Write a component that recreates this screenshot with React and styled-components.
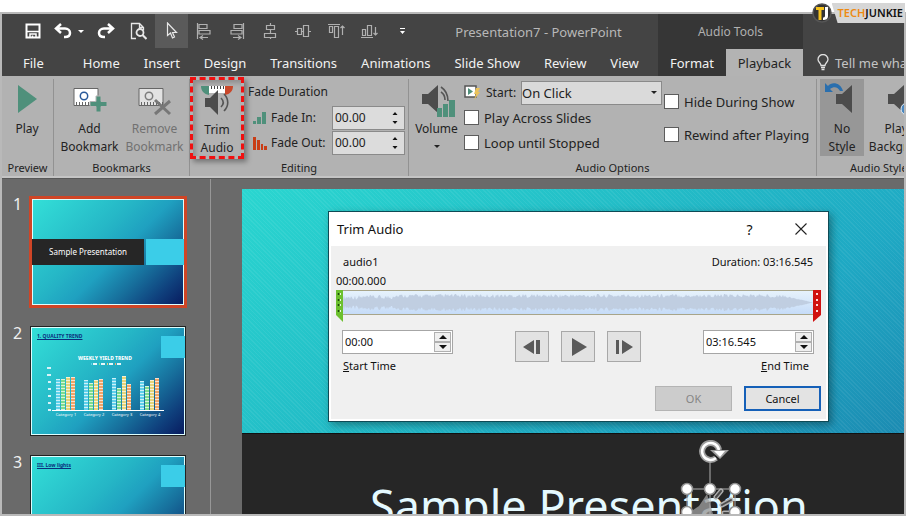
import React, { useState } from "react";
import styled, { createGlobalStyle } from "styled-components";

const TABS = [
  "Home",
  "Insert",
  "Design",
  "Transitions",
  "Animations",
  "Slide Show",
  "Review",
  "View",
];

const CHART = [
  [31, 31, 33, 33],
  [30, 27, 30, 31],
  [32, 22, 34, 26],
  [29, 24, 30, 32],
];
const CHART_COLORS = ["#5fd0ea", "#7fdc8c", "#e6d47a", "#f0a468"];

// peaks for the audio clip, quiet at the start and fading out at the end
function buildWave(width, mid) {
  const top = [];
  const bottom = [];
  for (let x = 0; x <= width; x += 1) {
    const noise = Math.abs(Math.sin(x * 12.9898) * 43758.5453) % 1;
    let level = 5 + noise * 4;
    if (x < 50) level = 3 + noise * 5;
    if (x > width - 30) level = Math.max(0, ((width - x) / 30) * 8 * (0.7 + noise * 0.3));
    top.push(`${x},${(mid - level).toFixed(1)}`);
    bottom.unshift(`${x},${(mid + level).toFixed(1)}`);
  }
  return top.concat(bottom).join(" ");
}

const WAVE = buildWave(470, 12);

function AlignIcon({ kind }) {
  const shapes = {
    left: <path d="M1.500 1v16M3 2.500h8v4H3zM3 8.500h11v3.500H3zM4 15.500h8M7 13.500l-3 2 3 2" />,
    right: <path d="M14.500 1v16M5 2.500h8v4H5zM2 8.500h11v3.500H2zM4 15.500h8M9 13.500l3 2-3 2" />,
    center: <path d="M8.500 1v2M8.500 8v3M8.500 16v1M4.500 3.500h8v4h-8zM2.500 11.500h11v4h-11z" />,
    middle: <path d="M0 9.500h2M7 9.500h2M14 9.500h2M2.500 6.500h4v6h-4zM8.500 3.500h5v11h-5z" />,
    top: <path d="M0 2.500h12M1.500 4.500h3v6h-3zM6.500 4.500h4v11h-4zM14.500 4v9M12.500 6l2-2 2 2" />,
    bottom: <path d="M0 15.500h12M1.500 7.500h3v6h-3zM6.500 3.500h4v10h-4zM14.500 5v8M12.500 11l2 2 2-2" />,
  };
  return (
    <svg width="17" height="18" viewBox="0 0 17 18" fill="none" stroke="#b0b0b0" strokeWidth="1.200">
      {shapes[kind]}
    </svg>
  );
}

function SaveIcon() {
  return (
    <svg width="16" height="16" viewBox="0 0 16 16" fill="none" stroke="#fff" strokeWidth="2">
      <path d="M1.500 1.500h13v13h-13z" />
      <path d="M2 8.500h12" strokeWidth="1.500" />
      <path d="M5 15v-4h6v4M7.500 12.500v2" strokeWidth="1.500" />
    </svg>
  );
}

function UndoIcon({ flip }) {
  return (
    <svg width="18" height="16" viewBox="0 0 18 16" fill="none" stroke="#fff" strokeWidth="2.500">
      <g transform={flip ? "matrix(-1 0 0 1 18 0)" : undefined}>
        <path d="M7 1L2 5.500 7 10M2.500 5.500H11c3 0 5 2 5 4.500S14 14 11 14h-1" />
      </g>
    </svg>
  );
}

function PreviewIcon() {
  return (
    <svg width="17" height="18" viewBox="0 0 17 18" fill="none" stroke="#e8e8e8" strokeWidth="1.300">
      <path d="M6 16.500H1.500v-15h8l4 4v3M9.500 1.500v4h4" />
      <circle cx="10" cy="10.500" r="3.500" strokeWidth="1.800" />
      <path d="M12.500 13l4 4" strokeWidth="2.200" />
    </svg>
  );
}

function PointerIcon() {
  return (
    <svg width="12" height="18" viewBox="0 0 12 18" fill="none" stroke="#e8e8e8" strokeWidth="1.200">
      <path d="M1.500 1v12.500l3-2.500 2 5 2-1-2-4.500h4z" />
    </svg>
  );
}

function SpeakerIcon({ children, x = 3 }) {
  return (
    <svg width="36" height="32" viewBox="0 0 36 32">
      <path transform={`translate(${x} 0)`} d="M0 11h6l10-9v28l-10-9H0z" fill="#4c4c4c" />
      {children}
    </svg>
  );
}

function TrimIcon() {
  return (
    <svg width="36" height="32" viewBox="0 0 36 32">
      <path d="M8 2h20v7H8z" fill="#fff" />
      <path d="M9 3.500h18" stroke="#444" strokeWidth="3" strokeDasharray="1 2" />
      <path d="M2 2h8v9C5 10 2 7 2 2z" fill="#4f907b" />
      <path d="M34 2h-8v9c5-1 8-4 8-9z" fill="#c9472a" />
      <path d="M6 14h5l8-8v25l-8-8H6z" fill="#4c4c4c" />
      <path d="M22 14c3 3 3 6 0 9M25 10c5 5 5 12 0 17" fill="none" stroke="#555" strokeWidth="1.600" />
    </svg>
  );
}

function BookmarkIcon({ removed }) {
  return (
    <svg width="36" height="32" viewBox="0 0 36 32">
      <path d="M2 5.500h24v17H2z" fill={removed ? "#e2e2e2" : "#fff"} stroke="#666" />
      <path d="M4 20.500h22" stroke="#666" strokeWidth="3" strokeDasharray="1 2" />
      <circle cx="12" cy="13" r="3.700" fill="none" stroke={removed ? "#7d7d7d" : "#2a5a9a"} strokeWidth="1.500" />
      {removed ? (
        <path d="M18 17l15 14M33 18L18 31" stroke="#777" strokeWidth="3" fill="none" />
      ) : (
        <path d="M24 13h5v5.500h6v5h-6V29h-5v-5.500h-6v-5h6z" fill="#4f907b" stroke="#b3b3b3" />
      )}
    </svg>
  );
}

function Bars({ down }) {
  return (
    <svg width="14" height="14" viewBox="0 0 14 14" fill={down ? "#c93d16" : "#4f907b"}>
      {down ? (
        <path d="M0 1h3v13H0zM4 4h3v10H4zM8 8h2v6H8zM11 10h3v4h-3z" />
      ) : (
        <path d="M0 10h3v3H0zM4 6h4v7H4zM9 1h4v12H9z" />
      )}
    </svg>
  );
}

function ThumbChart() {
  return (
    <svg width="124" height="60" viewBox="0 0 124 60">
      <text x="60" y="8" textAnchor="middle" fontSize="5" fontWeight="800" fill="#fff">
        WEEKLY YIELD TREND
      </text>
      {CHART_COLORS.map((color, i) => (
        <g key={color}>
          <rect x={46 + i * 8} y="11" width="1" height="2" fill={color} />
          <rect x={48 + i * 8} y="11" width="4" height="2" fill="#e6f6fa" />
        </g>
      ))}
      {[0, 1, 2, 3, 4, 5, 6].map((n) => (
        <rect key={n} x={n > 4 ? 2 : 3} y={15 + (6 - n) * 7} width={n > 4 ? 4 : 3} height="2" fill="#d8f3f8" />
      ))}
      {CHART.map((group, g) =>
        group.map((h, i) => (
          <g key={`${g}-${i}`}>
            <rect x={11 + g * 28 + i * 5} y={58 - h} width="4" height={h} fill={CHART_COLORS[i]} />
            <path
              d={`M${13 + g * 28 + i * 5} ${58 - h}v${h}`}
              stroke="#fff"
              strokeWidth="4"
              strokeDasharray="1 2"
              opacity="0.7"
            />
          </g>
        ))
      )}
      <path d="M7 58.500h112" stroke="#fff" />
    </svg>
  );
}

function Spinner({ id, label, value, onChange, small }) {
  return (
    <SpinBox $small={small}>
      <SpinInput id={id} aria-label={label} value={value} onChange={(e) => onChange(e.target.value)} />
      <SpinButtons>
        <SpinButton type="button" $small={small} aria-label="Increase">
          <svg width="8" height="4" viewBox="0 0 8 4">
            <path d={small ? "M1.500 4L4 1l2.500 3z" : "M0 4l4-4 4 4z"} fill="#111" />
          </svg>
        </SpinButton>
        <SpinButton type="button" $small={small} aria-label="Decrease">
          <svg width="8" height="4" viewBox="0 0 8 4">
            <path d={small ? "M1.500 0L4 3l2.500-3z" : "M0 0l4 4 4-4z"} fill="#111" />
          </svg>
        </SpinButton>
      </SpinButtons>
    </SpinBox>
  );
}

function TopBar() {
  return (
    <Header>
      <MainBar>
        <QuickAccess>
          <QuickButton aria-label="Save">
            <SaveIcon />
          </QuickButton>
          <QuickButton aria-label="Undo" $wide>
            <UndoIcon />
            <svg width="6" height="3" viewBox="0 0 6 3">
              <path d="M0 0h6L3 3z" fill="#fff" />
            </svg>
          </QuickButton>
          <QuickButton aria-label="Redo">
            <UndoIcon flip />
          </QuickButton>
          <QuickButton aria-label="Print preview">
            <PreviewIcon />
          </QuickButton>
          <QuickButton aria-label="Select" $active>
            <PointerIcon />
          </QuickButton>
          {["left", "right", "center", "middle", "top", "bottom"].map((kind) => (
            <QuickButton key={kind} aria-label={`Align ${kind}`}>
              <AlignIcon kind={kind} />
            </QuickButton>
          ))}
          <QuickButton aria-label="Customize">
            <svg width="5" height="6" viewBox="0 0 5 6">
              <path d="M0 0h5v1H0zM0 3h5L2.500 6z" fill="#fff" />
            </svg>
          </QuickButton>
        </QuickAccess>
        <WindowTitle>Presentation7 - PowerPoint</WindowTitle>
      </MainBar>
      <ToolTitle>Audio Tools</ToolTitle>
      <div />
      <Tabs>
        <FileTab>File</FileTab>
        {TABS.map((tab) => (
          <Tab key={tab}>{tab}</Tab>
        ))}
      </Tabs>
      <ToolTabs>
        <ToolTab>Format</ToolTab>
        <ToolTab $active>Playback</ToolTab>
      </ToolTabs>
      <TellMe>
        <svg width="12" height="17" viewBox="0 0 12 17" fill="none" stroke="#e0e0e0" strokeWidth="1.300">
          <path d="M4 11.500C4 9 1 8.500 1 5.500a5 5 0 0 1 10 0C11 8.500 8 9 8 11.500zM4 13.500h4M4.500 15.500h3" />
        </svg>
        Tell me what
      </TellMe>
    </Header>
  );
}

function Ribbon() {
  const [fadeIn, setFadeIn] = useState("00.00");
  const [fadeOut, setFadeOut] = useState("00.00");

  return (
    <RibbonBar>
      <Group $width={52}>
        <GroupBody>
          <BigButton $width={50}>
            <svg width="36" height="32" viewBox="0 0 36 32">
              <path d="M9 2l19 14L9 30z" fill="#4f907b" />
            </svg>
            <span>Play</span>
          </BigButton>
        </GroupBody>
        <GroupName>Preview</GroupName>
      </Group>

      <Group $width={136}>
        <GroupBody $pad={3}>
          <BigButton $width={65}>
            <BookmarkIcon />
            <span>
              Add
              <br />
              Bookmark
            </span>
          </BigButton>
          <BigButton $width={65} $dim>
            <BookmarkIcon removed />
            <span>
              Remove
              <br />
              Bookmark
            </span>
          </BigButton>
        </GroupBody>
        <GroupName>Bookmarks</GroupName>
      </Group>

      <Group $width={219}>
        <GroupBody>
          <Highlight>
            <BigButton $width={48}>
              <TrimIcon />
              <span>
                Trim
                <br />
                Audio
              </span>
            </BigButton>
          </Highlight>
          <FadeFields>
            <FadeHeading>Fade Duration</FadeHeading>
            <FadeRow>
              <Bars />
              <FadeLabel htmlFor="fade-in">Fade In:</FadeLabel>
              <Spinner id="fade-in" label="Fade In" small value={fadeIn} onChange={setFadeIn} />
            </FadeRow>
            <FadeRow>
              <Bars down />
              <FadeLabel htmlFor="fade-out">Fade Out:</FadeLabel>
              <Spinner id="fade-out" label="Fade Out" small value={fadeOut} onChange={setFadeOut} />
            </FadeRow>
          </FadeFields>
        </GroupBody>
        <GroupName>Editing</GroupName>
      </Group>

      <Group $grow>
        <GroupBody>
          <BigButton $width={55}>
            <SpeakerIcon x={3}>
              <path d="M22 4c6 4 7 9 7 14M22 9c3 2 4 5 4 8" fill="none" stroke="#555" strokeWidth="1.600" />
              <path d="M18 25h5v9h-5zM24 21h5v13h-5zM30 17h6v17h-6z" fill="#4f907b" />
            </SpeakerIcon>
            <span>Volume</span>
            <Caret width="6" height="3" viewBox="0 0 6 3">
              <path d="M0 0h6L3 3z" fill="#222" />
            </Caret>
          </BigButton>
          <Options>
            <OptionRow>
              <svg width="17" height="15" viewBox="0 0 17 15">
                <path d="M1 1h11v11H1z" fill="#fff" stroke="#555" strokeWidth="1.500" />
                <path d="M4 3l5 3.500L4 10z" fill="#4f907b" />
                <path d="M12 3h4l-2 4h2l-6 8 2-6h-2z" fill="#eac25a" />
              </svg>
              <StartLabel htmlFor="start">Start:</StartLabel>
              <StartSelect id="start" defaultValue="On Click">
                <option>On Click</option>
                <option>Automatically</option>
              </StartSelect>
            </OptionRow>
            <OptionRow as="label">
              <Check type="checkbox" />
              Play Across Slides
            </OptionRow>
            <OptionRow as="label">
              <Check type="checkbox" />
              Loop until Stopped
            </OptionRow>
          </Options>
          <Options $tall>
            <OptionRow as="label">
              <Check type="checkbox" />
              Hide During Show
            </OptionRow>
            <OptionRow as="label">
              <Check type="checkbox" />
              Rewind after Playing
            </OptionRow>
          </Options>
        </GroupBody>
        <GroupName>Audio Options</GroupName>
      </Group>

      <StylesSlot>
        <Group $width={130}>
          <GroupBody $pad={3}>
            <BigButton $width={44} $pressed>
              <SpeakerIcon x={12}>
                <path d="M1 0v9h8l-3-3c4-3 8-2 10 2h3C17 0 8-2 4 3z" fill="#2a6fae" />
              </SpeakerIcon>
              <span>
                No
                <br />
                Style
              </span>
            </BigButton>
            <BigButton $width={78}>
              <SpeakerIcon x={3}>
                <circle cx="22" cy="26" r="6" fill="#4a87c0" stroke="#e6eef5" />
              </SpeakerIcon>
              <span>
                Play in
                <br />
                Background
              </span>
            </BigButton>
          </GroupBody>
          <GroupName>Audio Styles</GroupName>
        </Group>
      </StylesSlot>
    </RibbonBar>
  );
}

function ThumbPanel() {
  return (
    <Panel>
      <ThumbRow>
        <ThumbNumber>1</ThumbNumber>
        <Thumb $selected>
          <ThumbBand>
            <BandTitle>Sample Presentation</BandTitle>
            <BandSquare />
          </ThumbBand>
        </Thumb>
      </ThumbRow>
      <ThumbRow>
        <ThumbNumber>2</ThumbNumber>
        <Thumb>
          <ThumbHead>
            <ThumbTitle>1. QUALITY TREND</ThumbTitle>
            <CornerSquare />
          </ThumbHead>
          <ChartSlot>
            <ThumbChart />
            <Categories>
              <span>Category 1</span>
              <span>Category 2</span>
              <span>Category 3</span>
              <span>Category 4</span>
            </Categories>
          </ChartSlot>
        </Thumb>
      </ThumbRow>
      <ThumbRow>
        <ThumbNumber>3</ThumbNumber>
        <Thumb>
          <ThumbHead>
            <ThumbTitle>III. Low lights</ThumbTitle>
            <CornerSquare />
          </ThumbHead>
        </Thumb>
      </ThumbRow>
    </Panel>
  );
}

function TrimDialog() {
  const [start, setStart] = useState("00:00");
  const [end, setEnd] = useState("03:16.545");

  return (
    <Dialog role="dialog" aria-label="Trim Audio">
      <DialogBar>
        <DialogTitle>Trim Audio</DialogTitle>
        <BarButton aria-label="Help">?</BarButton>
        <BarButton aria-label="Close">
          <svg width="12" height="12" viewBox="0 0 12 12" stroke="#222" strokeWidth="1.100">
            <path d="M0.500 0.500l11 11M11.500 0.500l-11 11" />
          </svg>
        </BarButton>
      </DialogBar>
      <DialogBody>
        <ClipInfo>
          <span>audio1</span>
          <span>Duration: 03:16.545</span>
        </ClipInfo>
        <Position>00:00.000</Position>
        <Timeline>
          <svg width="7" height="32" viewBox="0 0 7 32">
            <path d="M0 0h7v32l-7-7z" fill="#6cc02e" />
            <path d="M2.500 3v2M2.500 9v2M2.500 14v2M2.500 20v2" stroke="#1c4a08" strokeWidth="1.500" />
            <path d="M4.500 3v2M4.500 9v2M4.500 14v2M4.500 20v2" stroke="#e8f8d8" />
          </svg>
          <WaveBox>
            <svg width="100%" height="23" viewBox="0 0 470 24" preserveAspectRatio="none">
              <polygon points={WAVE} fill="#c0cee1" />
            </svg>
          </WaveBox>
          <svg width="8" height="32" viewBox="0 0 8 32">
            <path d="M0 0h8v25l-8 7z" fill="#d01010" />
            <path d="M4 3v2M4 9v2M4 14v2M4 20v2" stroke="#ffd8d8" strokeWidth="2" />
          </svg>
        </Timeline>
        <Controls>
          <TimeField>
            <Spinner id="start-time" label="Start Time" value={start} onChange={setStart} />
            <label htmlFor="start-time">
              <u>S</u>tart Time
            </label>
          </TimeField>
          <Transport>
            <StepButton aria-label="Previous frame">
              <svg width="20" height="18" viewBox="0 0 20 18" fill="#5a5a5a">
                <path d="M1 9l11-7v14zM14 2h4v14h-4z" />
              </svg>
            </StepButton>
            <StepButton aria-label="Play">
              <svg width="20" height="20" viewBox="0 0 20 20" fill="#5a5a5a">
                <path d="M4 1l15 9-15 9z" />
              </svg>
            </StepButton>
            <StepButton aria-label="Next frame">
              <svg width="20" height="18" viewBox="0 0 20 18" fill="#5a5a5a">
                <path d="M2 2h3v14H2zM8 2l11 7-11 7z" />
              </svg>
            </StepButton>
          </Transport>
          <TimeField $end>
            <Spinner id="end-time" label="End Time" value={end} onChange={setEnd} />
            <label htmlFor="end-time">
              <u>E</u>nd Time
            </label>
          </TimeField>
        </Controls>
        <Actions>
          <ActionButton disabled>OK</ActionButton>
          <ActionButton $primary>Cancel</ActionButton>
        </Actions>
      </DialogBody>
    </Dialog>
  );
}

function Selection() {
  return (
    <SelectionDrawing width="72" height="80" viewBox="0 0 72 80">
      <path d="M13 74l12-8 8-12 6 20z" fill="#9a9a9a" opacity="0.8" />
      <path d="M42 57l5-6M48 65l9-5M50 73h11" stroke="#b0b0b0" strokeWidth="5" strokeLinecap="round" />
      <path d="M42 57l5-6M48 65l9-5M50 73h11" stroke="#4a4a4a" strokeWidth="2" strokeLinecap="round" />
      <path d="M36 22v26M13 49h48M13 49v26M61 49v26M36 49v26" stroke="#b0b0b0" fill="none" />
      <path d="M42 18a8.500 8.500 0 1 1 3-8" stroke="#9d9d9d" strokeWidth="6" fill="none" />
      <path d="M36 10h19l-9 9z" fill="#9d9d9d" />
      <path d="M42 18a8.500 8.500 0 1 1 3-8" stroke="#fff" strokeWidth="2.500" fill="none" />
      <path d="M40 11h11l-5 6z" fill="#fff" />
      {[13, 36, 61].map((cx) => (
        <g key={cx} fill="#fff" stroke="#8f8f8f" strokeWidth="1.500">
          <circle cx={cx} cy="49" r="5.500" />
          {cx !== 36 && <circle cx={cx} cy="72" r="5.500" />}
        </g>
      ))}
    </SelectionDrawing>
  );
}

function App() {
  return (
    <>
      <GlobalStyle />
      <Page>
        <Frame>
          <TopBar />
          <Ribbon />
          <Workspace>
            <ThumbPanel />
            <Stage>
              <Slide>
                <SlideTop />
                <SlideBand>
                  <SlideTitle>Sample Presentation</SlideTitle>
                </SlideBand>
                <Selection />
              </Slide>
              <TrimDialog />
            </Stage>
          </Workspace>
        </Frame>
        <Brand>
          <svg width="20" height="20" viewBox="0 0 20 20">
            <circle cx="10" cy="10" r="9" fill="#333" stroke="#555" strokeWidth="1.500" />
            <path d="M4 4h8v3H9.500v10h-3V7H4z" fill="#f6c21c" />
            <path d="M13 4h3v9c0 3-2 4-5 4v-2.500c1.500 0 2-.5 2-2z" fill="#fff" />
          </svg>
          <BrandPlate>
            <BrandAccent>TECH</BrandAccent>JUNKIE
          </BrandPlate>
        </Brand>
      </Page>
    </>
  );
}

const GlobalStyle = createGlobalStyle`
  * {
    box-sizing: border-box;
  }
  body {
    margin: 0;
    background: #fff;
    font-family: "Noto Sans", "Open Sans", sans-serif;
    font-size: 12px;
    color: #222;
  }
  button, input, select {
    font: inherit;
    color: inherit;
    border-radius: 0;
  }
  button {
    border: 0;
    padding: 0;
    background: none;
    white-space: nowrap;
  }
  svg {
    display: block;
    flex-shrink: 0;
  }
`;

const Page = styled.div`
  position: relative;
  height: 100vh;
  padding: 12px 4px 0 0;
  overflow: hidden;
`;

const Frame = styled.div`
  display: flex;
  flex-direction: column;
  height: 100%;
  border: 2px solid #b9b9b9;
  background: #6a6a6a;
  overflow: hidden;
`;

const Header = styled.header`
  display: grid;
  grid-template-columns: minmax(0, 1fr) 145px 101px;
  grid-template-rows: 35px 27px;
  flex-shrink: 0;
  background: #444;
  color: #fff;
  font-size: 13px;
`;

const MainBar = styled.div`
  display: flex;
  align-items: center;
`;

const QuickAccess = styled.div`
  display: flex;
  height: 100%;
  padding-left: 14px;
`;

const QuickButton = styled.button`
  display: flex;
  align-items: center;
  justify-content: center;
  gap: 6px;
  width: ${({ $wide }) => ($wide ? 40 : 33)}px;
  height: 34px;
  background: ${({ $active }) => ($active ? "#5a5a5a" : "transparent")};
`;

const WindowTitle = styled.div`
  flex: 1;
  text-align: center;
  color: #b8b8b8;
  white-space: nowrap;
`;

const ToolTitle = styled.div`
  display: flex;
  align-items: center;
  justify-content: center;
  background: #363636;
  color: #b0b0b0;
  font-size: 12px;
`;

const Tabs = styled.nav`
  display: flex;
  align-items: center;
`;

const Tab = styled.button`
  padding: 0 12px;
  color: #f2f2f2;
`;

const FileTab = styled(Tab)`
  padding: 0 27px 0 21px;
`;

const ToolTabs = styled.nav`
  display: grid;
  grid-template-columns: 68px 1fr;
  background: #363636;
`;

const ToolTab = styled.button`
  background: ${({ $active }) => ($active ? "#b3b3b3" : "transparent")};
  color: ${({ $active }) => ($active ? "#222" : "#f2f2f2")};
`;

const TellMe = styled.div`
  display: flex;
  align-items: center;
  gap: 6px;
  padding-left: 14px;
  color: #c4c4c4;
  white-space: nowrap;
  overflow: hidden;
`;

const RibbonBar = styled.div`
  display: flex;
  flex-shrink: 0;
  height: 102px;
  padding-top: 3px;
  border-bottom: 2px solid #c4c4c4;
  background: #b2b2b2;
`;

const Group = styled.section`
  display: flex;
  flex-direction: column;
  flex: ${({ $grow }) => ($grow ? "1 1 0" : "none")};
  width: ${({ $width }) => ($width ? `${$width}px` : "auto")};
  height: 97px;
  border-right: 1px solid #929292;
`;

const GroupBody = styled.div`
  display: flex;
  flex: 1;
  padding-left: ${({ $pad }) => $pad || 0}px;
`;

const GroupName = styled.div`
  line-height: 16px;
  font-size: 11px;
  text-align: center;
  white-space: nowrap;
`;

const StylesSlot = styled.div`
  flex: 0 0 87px;
  overflow: hidden;
`;

const BigButton = styled.button`
  display: flex;
  flex-direction: column;
  align-items: center;
  justify-content: flex-start;
  gap: 5px;
  flex-shrink: 0;
  width: ${({ $width }) => $width}px;
  height: 77px;
  padding-top: 4px;
  line-height: 18px;
  text-align: center;
  color: ${({ $dim }) => ($dim ? "#717171" : "#222")};
  background: ${({ $pressed }) => ($pressed ? "#979797" : "transparent")};

  svg {
    overflow: visible;
  }
`;

const Caret = styled.svg`
  margin-top: 2px;
`;

// dashed frame that points out the Trim Audio command
const Highlight = styled.div`
  width: 54px;
  height: 82px;
  margin-top: -2px;
  border: 3px dashed #f01010;
  box-shadow: 3px 3px 5px rgba(0, 0, 0, 0.35), inset 3px 3px 5px rgba(0, 0, 0, 0.2);
`;

const FadeFields = styled.div`
  display: flex;
  flex-direction: column;
  padding-left: 4px;
`;

const FadeHeading = styled.div`
  line-height: 26px;
`;

const FadeRow = styled.div`
  display: flex;
  align-items: center;
  height: 25px;
  padding-left: 5px;
`;

const FadeLabel = styled.label`
  width: 61px;
  margin-left: 4px;
  white-space: nowrap;
`;

const SpinBox = styled.div`
  display: flex;
  width: ${({ $small }) => ($small ? 73 : 111)}px;
  height: 24px;
  padding: 1px;
  border: 1px solid ${({ $small }) => ($small ? "#8a8a8a" : "#a6a6a6")};
  background: ${({ $small }) => ($small ? "#dcdcdc" : "#fff")};
`;

const SpinInput = styled.input`
  flex: 1;
  min-width: 0;
  padding: 0 1px;
  border: 0;
  outline: 0;
  background: transparent;
`;

const SpinButtons = styled.div`
  display: flex;
  flex-direction: column;
  width: 17px;
`;

const SpinButton = styled.button`
  display: flex;
  flex: 1;
  align-items: center;
  justify-content: center;
  border: ${({ $small }) => ($small ? "0" : "1px solid #b0b0b0")};
  background: ${({ $small }) => ($small ? "transparent" : "#efefef")};
`;

const Options = styled.div`
  display: flex;
  flex-direction: column;
  width: ${({ $tall }) => ($tall ? 150 : 200)}px;
  padding-top: ${({ $tall }) => ($tall ? 6 : 1)}px;
  font-size: 13px;

  > * {
    height: ${({ $tall }) => ($tall ? 33 : 25)}px;
  }
`;

const OptionRow = styled.div`
  display: flex;
  align-items: center;
  gap: 5px;
  white-space: nowrap;
`;

const StartLabel = styled.label`
  width: 30px;
  font-size: 12px;
`;

const StartSelect = styled.select`
  appearance: none;
  width: 141px;
  height: 24px;
  padding: 0;
  border: 1px solid #8a8a8a;
  background: #dadada
    url("data:image/svg+xml,%3Csvg xmlns='http://www.w3.org/2000/svg' width='6' height='3'%3E%3Cpath d='M0 0h6L3 3z' fill='%23222'/%3E%3C/svg%3E")
    right 4px center / 6px 3px no-repeat;
`;

const Check = styled.input`
  appearance: none;
  width: 15px;
  height: 15px;
  margin: 0;
  border: 1px solid #5c5c5c;
  background: #fff;
`;

const Workspace = styled.main`
  display: flex;
  flex: 1;
  min-height: 0;
  border-top: 1px solid #585858;
`;

const Panel = styled.aside`
  display: flex;
  flex-direction: column;
  flex: none;
  gap: 19px;
  width: 209px;
  padding-top: 18px;
  border-right: 1px solid #979797;
  overflow: hidden;
`;

const ThumbRow = styled.div`
  display: flex;
  flex-shrink: 0;
`;

const ThumbNumber = styled.div`
  width: 28px;
  padding-left: 11px;
  font-size: 16px;
  line-height: 14px;
  color: #f0f0f0;
`;

const Thumb = styled.div`
  width: 156px;
  height: 110px;
  border: ${({ $selected }) => ($selected ? "2px solid #cf4526" : "1px solid #222")};
  padding-top: ${({ $selected }) => ($selected ? 40 : 9)}px;
  background: linear-gradient(135deg, #33e0d8 0%, #25b6c6 40%, #1fa0c0 55%, #176f9c 72%, #0f3f7c 87%, #081a5e 100%);
  box-shadow: inset 0 0 0 1px #dff${({ $selected }) => ($selected ? ", 0 0 0 1px #cf4526" : "")};
`;

const ThumbBand = styled.div`
  display: grid;
  grid-template-columns: 112px 1fr;
  gap: 2px;
  height: 26px;
`;

const BandTitle = styled.div`
  background: #262626;
  color: #fff;
  font-size: 8px;
  line-height: 26px;
  text-align: center;
`;

const BandSquare = styled.div`
  background: #3bcde8;
`;

const ThumbHead = styled.div`
  display: flex;
  justify-content: space-between;
  height: 22px;
`;

const ThumbTitle = styled.div`
  padding: 0 0 0 6px;
  margin-top: -4px;
  font-size: 5px;
  line-height: 8px;
  font-weight: 700;
  text-decoration: underline;
  color: #0a2f7c;
`;

const CornerSquare = styled.div`
  width: 24px;
  background: #3bcde8;
`;

const ChartSlot = styled.div`
  margin: -6px 0 0 14px;
`;

const Categories = styled.div`
  display: flex;
  gap: 4px;
  padding-left: 9px;
  font-size: 4px;
  line-height: 6px;
  color: #fff;

  span {
    width: 24px;
    text-align: center;
    white-space: nowrap;
  }
`;

const Stage = styled.div`
  position: relative;
  display: flex;
  flex: 1;
  min-width: 0;
  padding: 10px 0 0 31px;
  overflow: hidden;
`;

const Slide = styled.div`
  position: relative;
  display: flex;
  flex-direction: column;
  flex: 1;
  min-width: 0;
`;

const SlideTop = styled.div`
  flex: 0 0 244px;
  background: repeating-linear-gradient(45deg, rgba(255, 255, 255, 0.06) 0 1px, transparent 1px 3px),
    linear-gradient(145deg, #2ad6d0 0%, #23bdc7 40%, #1fa9c4 70%, #1c8bb2 100%);
`;

const SlideBand = styled.div`
  flex: 1;
  min-height: 0;
  border-top: 1px solid #111;
  background: #262626;
  overflow: hidden;
`;

const SlideTitle = styled.h1`
  margin: 0;
  padding: 41px 0 0 128px;
  font-size: 45px;
  font-weight: 400;
  line-height: 61px;
  white-space: nowrap;
  color: #e4f9ff;
`;

// handles around the audio clip that sits on the title
const SelectionDrawing = styled.svg`
  position: absolute;
  left: 432px;
  top: 251px;
`;

const Dialog = styled.div`
  position: absolute;
  top: 32px;
  left: 117px;
  width: 501px;
  padding: 0 2px 2px;
  border: 1px solid #0e4a55;
  background: #fff;
  color: #111;
  font-size: 11px;
  box-shadow: 3px 3px 8px rgba(0, 0, 0, 0.35);
`;

const DialogBar = styled.div`
  display: flex;
  align-items: center;
  height: 34px;
  padding-left: 6px;
`;

const DialogTitle = styled.h2`
  flex: 1;
  margin: 0;
  font-size: 13px;
  font-weight: 400;
`;

const BarButton = styled.button`
  display: flex;
  align-items: center;
  justify-content: center;
  width: 51px;
  height: 34px;
  font-size: 14px;
`;

const DialogBody = styled.div`
  padding: 6px 5px 8px;
  background: #f0f0f0;
`;

const ClipInfo = styled.div`
  display: flex;
  justify-content: space-between;
  padding: 0 8px 0 7px;
  line-height: 20px;
`;

const Position = styled.div`
  line-height: 18px;
`;

const Timeline = styled.div`
  display: flex;
  height: 32px;
`;

const WaveBox = styled.div`
  flex: 1;
  min-width: 0;
  height: 25px;
  border-top: 1px solid #a8a58a;
  border-bottom: 1px solid #a8a58a;
  background: linear-gradient(#e6f2fc, #c6dcf8);
`;

const Controls = styled.div`
  display: flex;
  justify-content: space-between;
  padding: 8px 7px 0 6px;
`;

const TimeField = styled.div`
  display: flex;
  flex-direction: column;
  align-items: ${({ $end }) => ($end ? "flex-end" : "flex-start")};
  line-height: 24px;

  label {
    padding: 0 ${({ $end }) => ($end ? 5 : 1)}px;
  }
`;

const Transport = styled.div`
  display: flex;
  gap: 12px;
  padding-top: 1px;
`;

const StepButton = styled.button`
  display: flex;
  align-items: center;
  justify-content: center;
  width: 34px;
  height: 31px;
  border: 1px solid #a8a8a8;
  background: #e2e2e2;
`;

const Actions = styled.div`
  display: flex;
  justify-content: flex-end;
  gap: 12px;
  padding-top: 8px;
`;

const ActionButton = styled.button`
  width: 77px;
  height: 25px;
  border: ${({ $primary }) => ($primary ? "2px solid #1560b8" : "1px solid #b4b4b4")};
  background: ${({ $primary }) => ($primary ? "#e3e3e3" : "#cccccc")};
  color: ${({ $primary }) => ($primary ? "#111" : "#858585")};
`;

const Brand = styled.div`
  position: absolute;
  top: 3px;
  right: 5px;
  display: flex;
  align-items: center;
`;

const BrandPlate = styled.div`
  padding: 0 2px 0 6px;
  background: #d6d6d6;
  clip-path: polygon(0 0, 100% 0, 100% 100%, 6px 100%);
  font-size: 11px;
  font-weight: 600;
  line-height: 20px;
  color: #111;
`;

const BrandAccent = styled.span`
  color: #ee8a12;
`;

export default App;
